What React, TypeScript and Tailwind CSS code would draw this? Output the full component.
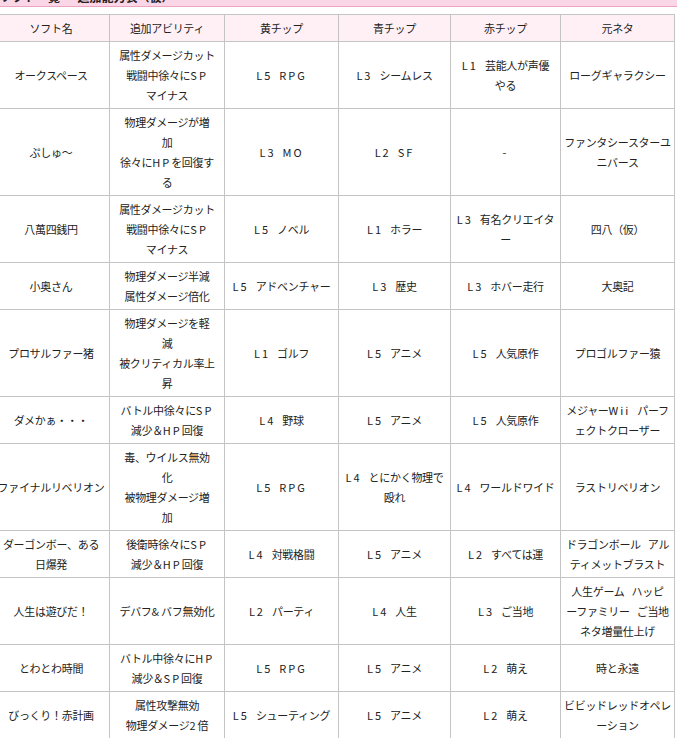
import React from "react"

const head = ["ソフト名", "追加アビリティ", "黄チップ", "青チップ", "赤チップ", "元ネタ"]

const rows: string[][] = [
  ["オークスペース", "属性ダメージカット\n戦闘中徐々にSP\nマイナス", "L5 RPG", "L3 シームレス", "L1 芸能人が声優\nやる", "ローグギャラクシー"],
  ["ぷしゅ〜", "物理ダメージが増\n加\n徐々にHPを回復す\nる", "L3 MO", "L2 SF", "-", "ファンタシースターユ\nニバース"],
  ["八萬四銭円", "属性ダメージカット\n戦闘中徐々にSP\nマイナス", "L5 ノベル", "L1 ホラー", "L3 有名クリエイタ\nー", "四八（仮）"],
  ["小奥さん", "物理ダメージ半減\n属性ダメージ倍化", "L5 アドベンチャー", "L3 歴史", "L3 ホバー走行", "大奥記"],
  ["プロサルファー猪", "物理ダメージを軽\n減\n被クリティカル率上\n昇", "L1 ゴルフ", "L5 アニメ", "L5 人気原作", "プロゴルファー猿"],
  ["ダメかぁ・・・", "バトル中徐々にSP\n減少＆HP回復", "L4 野球", "L5 アニメ", "L5 人気原作", "メジャーWii パーフ\nェクトクローザー"],
  ["ファイナルリベリオン", "毒、ウイルス無効\n化\n被物理ダメージ増\n加", "L5 RPG", "L4 とにかく物理で\n殴れ", "L4 ワールドワイド", "ラストリベリオン"],
  ["ダーゴンボー、ある\n日爆発", "後衛時徐々にSP\n減少＆HP回復", "L4 対戦格闘", "L5 アニメ", "L2 すべては運", "ドラゴンボール アル\nティメットブラスト"],
  ["人生は遊びだ！", "デバフ&バフ無効化", "L2 パーティ", "L4 人生", "L3 ご当地", "人生ゲーム ハッピ\nーファミリー ご当地\nネタ増量仕上げ"],
  ["とわとわ時間", "バトル中徐々にHP\n減少＆SP回復", "L5 RPG", "L5 アニメ", "L2 萌え", "時と永遠"],
  ["びっくり！赤計画", "属性攻撃無効\n物理ダメージ2倍", "L5 シューティング", "L5 アニメ", "L2 萌え", "ビビッドレッドオペレ\nーション"],
]

// ascii runs in the reference are spaced wider than the kana
function Line({ text }: { text: string }) {
  const parts = text.split(/([ -~]+)/).filter((p) => p !== "")
  return (
    <>
      {parts.map((p, i) =>
        /^[ -~]+$/.test(p) ? (
          <span key={i} className="tracking-[2px]">
            {p.split(" ").map((w, j) => (
              <React.Fragment key={j}>
                {j > 0 && <span className="inline-block w-[7px]" />}
                {w}
              </React.Fragment>
            ))}
          </span>
        ) : (
          <span key={i}>{p}</span>
        )
      )}
    </>
  )
}

function CellText({ text }: { text: string }) {
  const lines = text.split("\n")
  return (
    <>
      {lines.map((l, i) => (
        <React.Fragment key={i}>
          {i > 0 && <br />}
          <Line text={l} />
        </React.Fragment>
      ))}
    </>
  )
}

export default function App() {
  return (
    <div className="min-h-[738px] bg-white overflow-hidden text-[#222] font-['Noto_Sans_CJK_JP',sans-serif]">
      {/* page heading, scrolled mostly out of view */}
      <div className="h-[7px] bg-[#fbd6e6] border-b border-[#eea3c1] overflow-hidden flex items-end">
        <p className="text-[12px] font-bold leading-none whitespace-nowrap -translate-y-[3px]">
          ソフト一覧 － 追加能力表（仮）
        </p>
      </div>
      <table className="mt-[7px] ml-[-8px] w-[682px] table-fixed border-collapse text-[11px] tracking-[-0.3px]">
        <colgroup>
          <col className="w-[117px]" />
          <col className="w-[115px]" />
          <col className="w-[114px]" />
          <col className="w-[112px]" />
          <col className="w-[110px]" />
          <col className="w-[114px]" />
        </colgroup>
        <thead>
          <tr>
            {head.map((h) => (
              <th
                key={h}
                className="border border-[#c4c4c4] bg-[#fff0f6] py-[3px] px-[2px] font-normal leading-[20px] text-center whitespace-nowrap"
              >
                {h}
              </th>
            ))}
          </tr>
        </thead>
        <tbody>
          {rows.map((r, ri) => (
            <tr key={ri}>
              {r.map((c, ci) => (
                <td
                  key={ci}
                  className="border border-[#c4c4c4] py-[3px] px-[2px] leading-[20px] text-center align-middle whitespace-nowrap"
                >
                  <CellText text={c} />
                </td>
              ))}
            </tr>
          ))}
        </tbody>
      </table>
    </div>
  )
}
